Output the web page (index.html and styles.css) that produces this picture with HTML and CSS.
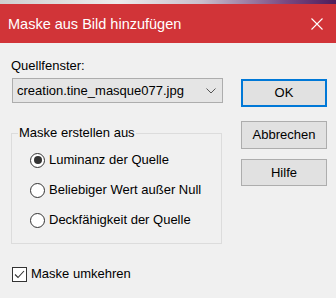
FILE: index.html
```html
<!DOCTYPE html>
<html lang="de">
<head>
    <meta charset="UTF-8">
    <meta name="viewport" content="width=device-width, initial-scale=1.0">
    <title>Maske aus Bild hinzufügen</title>
    <link rel="stylesheet" href="styles.css">
</head>
<body>
    <div class="strip"></div>
    <div class="titlebar">
        <span class="title">Maske aus Bild hinzufügen</span>
        <svg class="close" width="12" height="12" viewBox="0 0 12 12">
            <path d="M0.5 0.5 L11.5 11.5 M11.5 0.5 L0.5 11.5" stroke="#fff" stroke-width="1.1" fill="none"/>
        </svg>
    </div>
    <div class="content">
        <div class="left">
            <div class="label">Quellfenster:</div>
            <div class="select">
                <span>creation.tine_masque077.jpg</span>
                <svg width="10" height="6" viewBox="0 0 10 6">
                    <path d="M0.5 0.5 L5 5 L9.5 0.5" stroke="#555" stroke-width="1" fill="none"/>
                </svg>
            </div>
            <fieldset class="group">
                <legend>Maske erstellen aus</legend>
                <div class="radio checked"><span class="dot"></span>Luminanz der Quelle</div>
                <div class="radio"><span class="dot"></span>Beliebiger Wert außer Null</div>
                <div class="radio"><span class="dot"></span>Deckfähigkeit der Quelle</div>
            </fieldset>
            <div class="check">
                <span class="box">
                    <svg width="13" height="13" viewBox="0 0 13 13">
                        <path d="M2 6.5 L5 9.5 L11 3" stroke="#333" stroke-width="1.1" fill="none"/>
                    </svg>
                </span>
                Maske umkehren
            </div>
        </div>
        <div class="right">
            <div class="btn default">OK</div>
            <div class="btn cancel">Abbrechen</div>
            <div class="btn help">Hilfe</div>
        </div>
    </div>
</body>
</html>
```
FILE: styles.css
```css
body {
    margin: 0;
    background-color: #f0f0f0;
    font-family: "Liberation Sans", Arial, sans-serif;
    font-size: 13px;
    line-height: 16px;
    color: #000;
    width: 336px;
    height: 298px;
    overflow: hidden;
}

.strip {
    height: 4px;
    background: linear-gradient(to right, #cfcfcf 0%, #ececec 35%, #c9bfcc 60%, #7a4a82 85%, #4e1d5a 100%);
}

.titlebar {
    height: 39px;
    background-color: #d13438;
    display: flex;
    align-items: center;
    justify-content: space-between;
    padding: 0 13px 0 8px;
}
.title {
    color: #fff;
    font-size: 14.5px;
}

.content {
    display: flex;
    padding: 15px 0 0 11px;
}

.left {
    width: 212px;
}

.label {
    height: 16px;
}

.select {
    margin: 4px 0 0 1px;
    height: 23px;
    border: 1px solid #adadad;
    background-color: #e5e5e5;
    display: flex;
    align-items: center;
    justify-content: space-between;
    padding: 0 6px 0 4px;
    line-height: 23px;
}

.group {
    margin: 22px 0 0 0;
    width: 211px;
    box-sizing: border-box;
    border: 1px solid #dcdcdc;
    padding: 4px 0 8px 18px;
}
.group legend {
    padding: 0 1px;
    margin-left: -12px;
    line-height: 16px;
}

.radio {
    height: 30px;
    display: flex;
    align-items: center;
}
.dot {
    width: 13px;
    height: 13px;
    border: 1px solid #333;
    border-radius: 50%;
    background-color: #fff;
    margin-right: 4px;
    display: flex;
    align-items: center;
    justify-content: center;
}
.radio.checked .dot::after {
    content: "";
    width: 8px;
    height: 8px;
    border-radius: 50%;
    background-color: #333;
}

.check {
    margin: 22px 0 0 1px;
    display: flex;
    align-items: center;
    height: 16px;
}
.box {
    width: 13px;
    height: 13px;
    border: 1px solid #333;
    background-color: #fff;
    margin-right: 4px;
    display: flex;
}

.right {
    margin: 21px 0 0 18px;
    width: 86px;
    display: flex;
    flex-direction: column;
}
.btn {
    height: 26px;
    border: 1px solid #adadad;
    background-color: #e1e1e1;
    text-align: center;
    line-height: 26px;
}
.btn.default {
    height: 24px;
    line-height: 24px;
    border: 2px solid #0078d7;
}
.btn.cancel {
    margin-top: 14px;
}
.btn.help {
    margin-top: 10px;
    height: 25px;
    line-height: 25px;
}
```
